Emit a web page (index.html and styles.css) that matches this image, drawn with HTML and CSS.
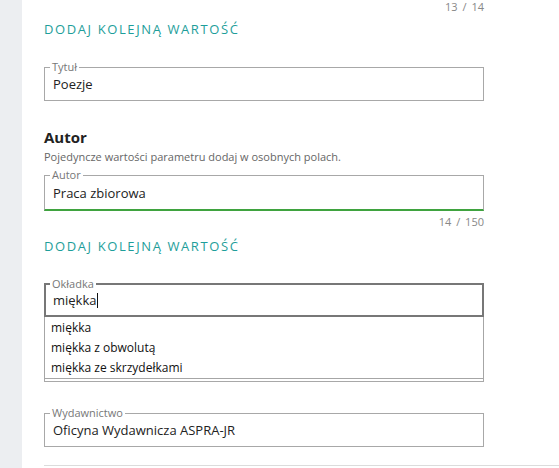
FILE: index.html
```html
<!DOCTYPE html>
<html lang="pl">
<head>
    <meta charset="UTF-8">
    <meta name="viewport" content="width=device-width, initial-scale=1.0">
    <title>Parametry</title>
    <link rel="stylesheet" href="styles.css">
</head>
<body>
    <div class="sidebar"></div>
    <div class="main">
        <div class="counter counter-top">13 / 14</div>
        <div class="add-value">Dodaj kolejną wartość</div>

        <fieldset class="field field-first">
            <legend>Tytuł</legend>
            <div class="value">Poezje</div>
        </fieldset>

        <h3 class="param-title">Autor</h3>
        <p class="param-hint">Pojedyncze wartości parametru dodaj w osobnych polach.</p>
        <fieldset class="field field-valid">
            <legend>Autor</legend>
            <div class="value">Praca zbiorowa</div>
        </fieldset>
        <div class="counter">14 / 150</div>
        <div class="add-value">Dodaj kolejną wartość</div>

        <div class="combo">
            <fieldset class="field field-active">
                <legend>Okładka</legend>
                <div class="value">miękka<span class="caret"></span></div>
            </fieldset>
            <ul class="suggestions">
                <li>miękka</li>
                <li>miękka z obwolutą</li>
                <li>miękka ze skrzydełkami</li>
            </ul>
        </div>

        <!-- field hidden behind the suggestion list -->
        <fieldset class="field field-covered">
            <div class="value"></div>
        </fieldset>

        <fieldset class="field">
            <legend>Wydawnictwo</legend>
            <div class="value">Oficyna Wydawnicza ASPRA-JR</div>
        </fieldset>

        <div class="separator"></div>
    </div>
</body>
</html>
```

FILE: styles.css
```css
body {
    margin: 0;
    font-family: 'Open Sans', sans-serif;
    background-color: white;
    color: #222;
    display: flex;
    min-height: 100vh;
    overflow: hidden;
}
.sidebar {
    width: 22px;
    flex-shrink: 0;
    background-color: #eceef1;
}
.main {
    flex: 1;
    padding-left: 22px;
}
.counter {
    width: 440px;
    text-align: right;
    font-size: 11px;
    line-height: 14px;
    color: #888;
    word-spacing: 2px;
    margin-top: 4px;
}
.counter-top {
    margin-top: 0;
}
.add-value {
    margin-top: 8px;
    font-size: 13px;
    line-height: 18px;
    text-transform: uppercase;
    letter-spacing: 1.6px;
    color: #1e9e9a;
}
.counter-top + .add-value {
    margin-top: 6px;
}
.field {
    width: 440px;
    box-sizing: border-box;
    margin: 24px 0 0 0;
    padding: 0;
    border: 1px solid #a8a8a8;
    min-width: 0;
}
.field legend {
    margin-left: 5px;
    padding: 0 2px;
    font-size: 11px;
    line-height: 14px;
    color: #777;
}
.field .value {
    height: 26px;
    padding: 0 8px;
    font-size: 13px;
    line-height: 20px;
}
.field-first {
    margin-top: 22px;
}
.field-valid {
    margin-top: 4px;
    border-bottom: 2px solid #3fa33f;
}
.field-valid .value {
    height: 27px;
    line-height: 22px;
}
.field-active {
    margin-top: 22px;
    border: 2px solid #777;
}
.field-active legend {
    margin-left: 4px;
}
.field-active .value {
    height: 24px;
    padding-left: 7px;
    line-height: 18px;
}
.field-covered {
    margin-top: 31px;
}
.field-covered .value {
    height: 32px;
}
.caret {
    display: inline-block;
    width: 1px;
    height: 15px;
    background-color: #111;
    vertical-align: -3px;
}
.param-title {
    margin: 26px 0 0 0;
    font-size: 15px;
    line-height: 20px;
    font-weight: 700;
}
.param-hint {
    margin: 3px 0 0 0;
    font-size: 11px;
    line-height: 14px;
    color: #666;
}
.combo {
    position: relative;
    width: 440px;
}
.suggestions {
    position: absolute;
    top: 100%;
    left: 0;
    z-index: 2;
    width: 438px;
    margin: 0;
    padding: 1px 0 0 0;
    list-style: none;
    background: white;
    border: 1px solid #a6a6a6;
    border-top: none;
}
.suggestions li {
    padding-left: 6px;
    font-size: 12px;
    line-height: 20px;
    color: #111;
}
.separator {
    margin-top: 18px;
    border-top: 1px solid #dcdcdc;
}
```
